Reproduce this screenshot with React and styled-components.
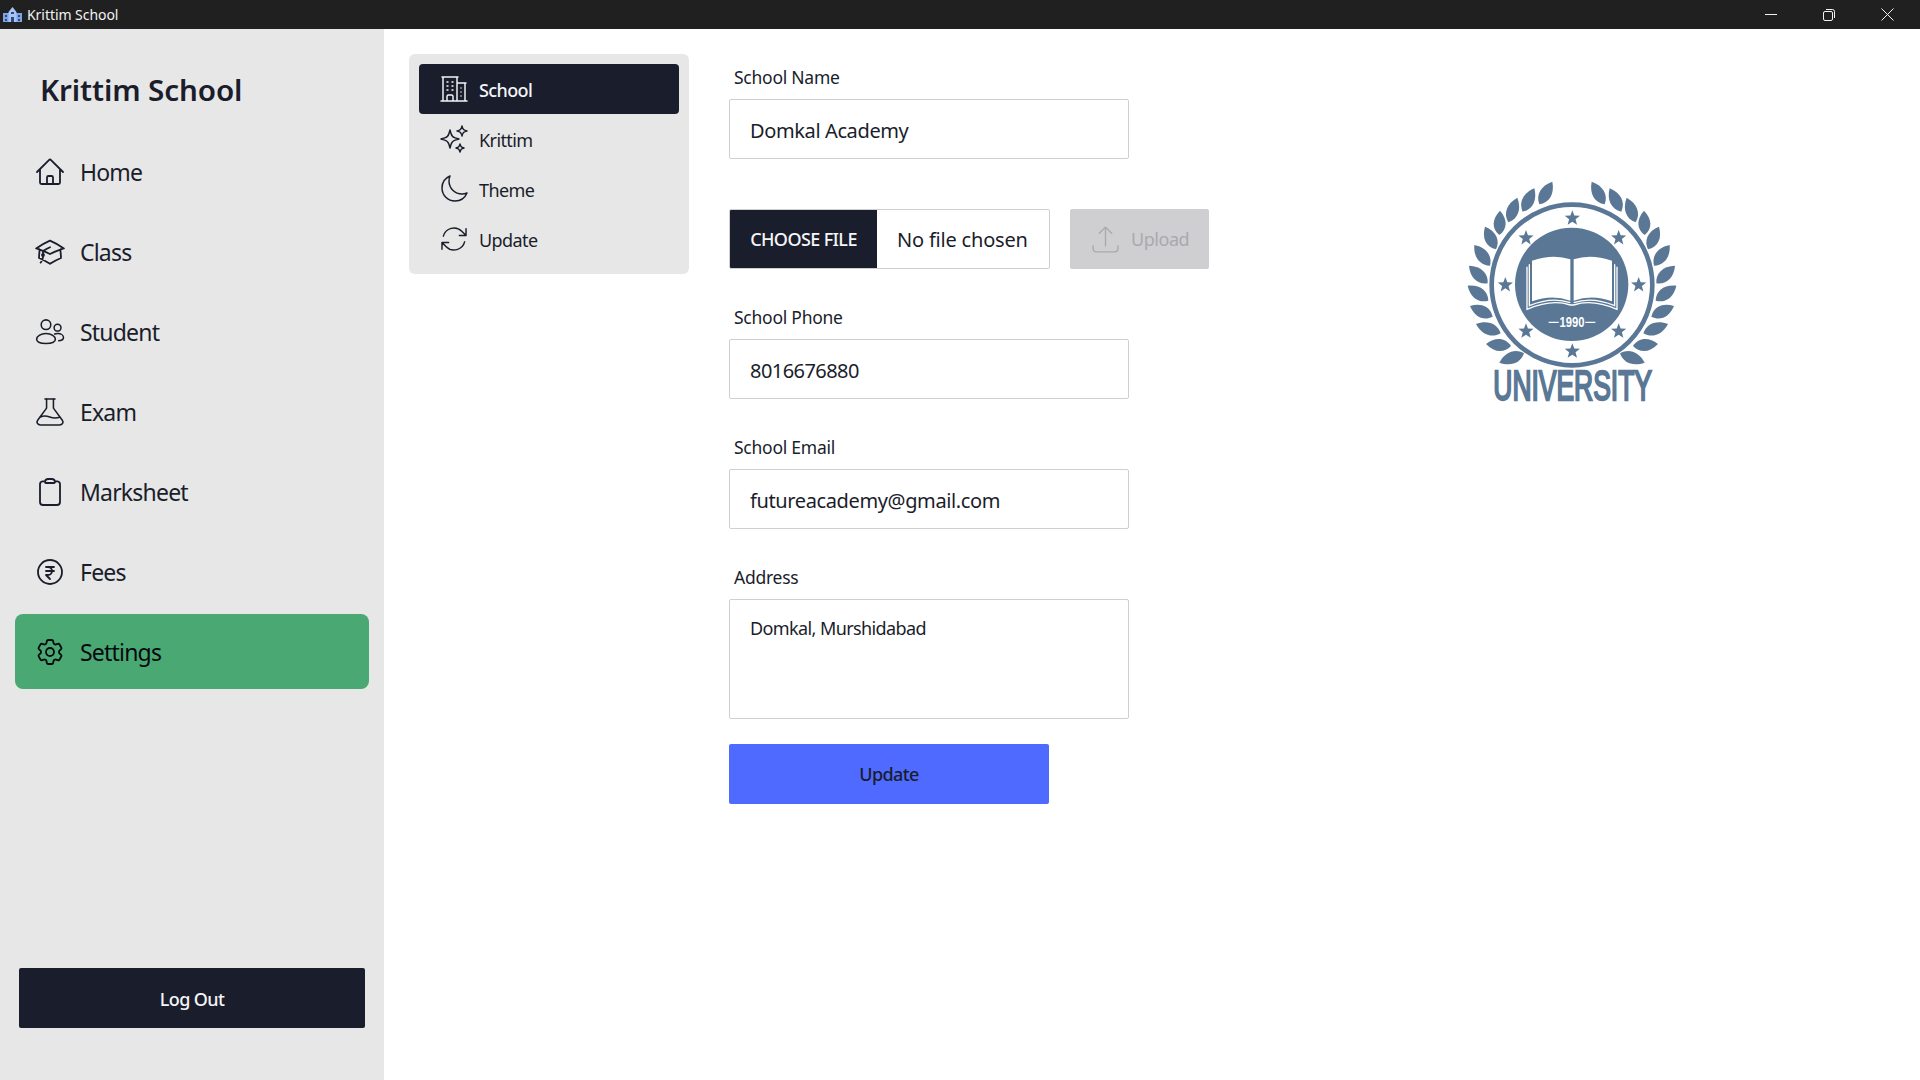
import React from "react";
import styled, { createGlobalStyle } from "styled-components";
import {
  HiOutlineHome,
  HiOutlineAcademicCap,
  HiOutlineClipboard,
  HiOutlineCurrencyRupee,
  HiOutlineCog6Tooth,
  HiOutlineBuildingOffice2,
  HiOutlineSparkles,
  HiOutlineMoon,
  HiOutlineArrowPath,
  HiOutlineArrowUpTray,
} from "react-icons/hi2";

const FONT = `"Noto Sans", "Open Sans", "Liberation Sans", sans-serif`;
const NAVY = "#1a1d2b";
const LOGO = "#5a7896";

const Global = createGlobalStyle`
  html, body { margin: 0; padding: 0; background: #fff; }
  body { font-family: ${FONT}; color: ${NAVY}; overflow: hidden; }
  * { box-sizing: border-box; }
`;

const Window = styled.div`
  width: 1920px;
  height: 1080px;
  display: flex;
  flex-direction: column;
  overflow: hidden;
`;

const TitleBar = styled.header`
  height: 29px;
  flex: none;
  background: #202020;
  color: #f2f2f2;
  display: flex;
  align-items: center;
  font-size: 14px;
  letter-spacing: -0.05px;
  padding: 0 4px 0 3px;
`;
const TitleText = styled.span`
  margin-left: 5px;
  flex: 1;
`;
const WinButton = styled.div`
  width: 58px;
  height: 29px;
  display: flex;
  align-items: center;
  justify-content: center;
`;

const Body = styled.div`
  flex: 1;
  display: flex;
  min-height: 0;
`;

const Sidebar = styled.aside`
  width: 384px;
  flex: none;
  background: #e7e7e7;
  display: flex;
  flex-direction: column;
  padding: 0 15px;
`;
const Brand = styled.h1`
  margin: 0;
  height: 105px;
  padding: 41px 0 0 25px;
  font-size: 29.6px;
  line-height: 40px;
  font-weight: 600;
  letter-spacing: -0.1px;
`;
const Nav = styled.nav`
  display: flex;
  flex-direction: column;
  gap: 5px;
`;
const NavItem = styled.div`
  height: 75px;
  border-radius: 8px;
  display: flex;
  align-items: center;
  gap: 14px;
  padding-left: 19px;
  font-size: 23px;
  letter-spacing: -0.8px;
  background: ${(p) => (p.$active ? "#4aa873" : "transparent")};
  color: ${(p) => (p.$active ? "#050a10" : NAVY)};
  svg { width: 32px; height: 32px; flex: none; stroke-width: 1.35; }
`;
const LogoutButton = styled.button`
  margin: auto 4px 52px;
  height: 60px;
  flex: none;
  border: 0;
  border-radius: 2px;
  padding: 2px 0 0;
  background: ${NAVY};
  color: #f4f5f7;
  font-family: ${FONT};
  font-size: 18px;
  font-weight: 500;
  letter-spacing: -0.6px;
`;

const Main = styled.main`
  flex: 1;
  display: flex;
  align-items: flex-start;
  padding-left: 25px;
`;

const SubMenu = styled.div`
  width: 280px;
  height: 220px;
  margin-top: 25px;
  padding: 10px;
  background: #e7e7e7;
  border-radius: 6px;
  display: flex;
  flex-direction: column;
  flex: none;
`;
const SubItem = styled.div`
  height: 50px;
  display: flex;
  align-items: center;
  gap: 9px;
  padding-left: 19px;
  padding-top: 1px;
  font-size: 18px;
  letter-spacing: -0.6px;
  border-radius: 4px;
  font-weight: ${(p) => (p.$active ? 500 : 400)};
  background: ${(p) => (p.$active ? NAVY : "transparent")};
  color: ${(p) => (p.$active ? "#f4f5f7" : NAVY)};
  svg { width: 32px; height: 32px; flex: none; stroke-width: 1.1; margin-top: -2px; }
`;

const Form = styled.form`
  margin-left: 40px;
  width: 480px;
  flex: none;
  display: flex;
  flex-direction: column;
`;
const Field = styled.div`
  padding-top: 38px;
  display: flex;
  flex-direction: column;
`;
const Label = styled.label`
  height: 20px;
  line-height: 20px;
  margin: 0 0 12px 5px;
  font-size: 17.5px;
  letter-spacing: -0.25px;
`;
const TextInput = styled.input`
  width: 400px;
  height: 60px;
  padding: 2px 20px 0;
  border: 1px solid #cfcfd1;
  border-radius: 2px;
  background: #fff;
  color: ${NAVY};
  font-family: ${FONT};
  font-size: 20px;
  letter-spacing: ${(p) => p.$spacing || "-0.38px"};
  outline: none;
`;
const AddressInput = styled.textarea`
  width: 400px;
  height: 120px;
  padding: 16px 20px;
  border: 1px solid #cfcfd1;
  border-radius: 2px;
  background: #fff;
  color: ${NAVY};
  font-family: ${FONT};
  font-size: 18px;
  line-height: 24px;
  letter-spacing: -0.6px;
  resize: none;
  outline: none;
  display: block;
`;
const FileRow = styled.div`
  margin-top: 50px;
  display: flex;
  gap: 20px;
`;
const FileBox = styled.div`
  width: 321px;
  height: 60px;
  border: 1px solid #cfcfd1;
  border-radius: 2px;
  display: flex;
  align-items: center;
  overflow: hidden;
`;
const ChooseButton = styled.div`
  width: 147px;
  height: 100%;
  background: ${NAVY};
  color: #f4f5f7;
  display: flex;
  align-items: center;
  justify-content: center;
  font-size: 18px;
  font-weight: 500;
  letter-spacing: -0.6px;
`;
const FileName = styled.span`
  margin-left: 20px;
  font-size: 20px;
  letter-spacing: -0.2px;
`;
const UploadButton = styled.button`
  width: 139px;
  height: 60px;
  border: 0;
  border-radius: 2px;
  background: #cfcfd1;
  color: #a9a9ae;
  font-family: ${FONT};
  font-size: 18px;
  letter-spacing: -0.45px;
  display: flex;
  align-items: center;
  gap: 9px;
  padding: 0 0 0 19px;
  svg { width: 33px; height: 33px; stroke-width: 1; flex: none; }
`;
const SubmitButton = styled.button`
  width: 320px;
  height: 60px;
  margin-top: 25px;
  border: 0;
  border-radius: 2px;
  background: #4f6bff;
  color: ${NAVY};
  font-family: ${FONT};
  font-size: 18px;
  font-weight: 500;
  letter-spacing: -0.6px;
`;

const LogoBox = styled.div`
  margin: 141px 0 0 231px;
  width: 260px;
  height: 240px;
  flex: none;
  svg { width: 100%; height: 100%; display: block; }
`;

const UsersIcon = () => (
  <svg viewBox="0 0 28 28" fill="none" stroke="currentColor">
    <circle cx="10.5" cy="7.6" r="4.2" />
    <circle cx="20.6" cy="10.2" r="3" />
    <path d="M10.5 15.4c-4.8 0-8.2 2.3-8.2 4.9 0 2.3 3.2 3.7 8.2 3.7s8.2-1.4 8.2-3.7c0-2.6-3.4-4.9-8.2-4.9Z" />
    <path d="M17.6 16c1-.4 2-.6 3.2-.6 3 0 5 1.6 5 3.5 0 1.6-1.7 2.7-4.7 2.8" />
  </svg>
);

const FlaskIcon = () => (
  <svg viewBox="0 0 28 28" fill="none" stroke="currentColor" strokeLinejoin="round" strokeLinecap="round">
    <path d="M9.6 2.6h8.8" />
    <path d="M11 2.6v8L3.2 21.2c-1.3 2-.2 4.2 2.6 4.2h16.4c2.8 0 3.9-2.2 2.6-4.2L17 10.6v-8" />
    <path d="M5.6 18.4c3-1.6 5.6-1 8.2 0 3 1.1 5.6 1.2 8.6.2" />
  </svg>
);

const RestoreIcon = () => (
  <svg width="12" height="12" viewBox="0 0 12 12" fill="none" stroke="#f2f2f2" strokeWidth="1">
    <rect x="0.5" y="2.5" width="9" height="9" rx="1.5" />
    <path d="M3 .5h6.5a2 2 0 0 1 2 2V9" />
  </svg>
);

const SchoolGlyph = () => (
  <svg width="19" height="15" viewBox="0 0 19 15">
    <rect x="0" y="6" width="19" height="9" fill="#7ea4e6" />
    <path d="M9.5 0 13.5 5V15H5.5V5Z" fill="#a9c5f2" />
    <rect x="8" y="10" width="3" height="5" fill="#2d4a86" />
    <rect x="8" y="5" width="3" height="2" fill="#2d4a86" />
    <path d="M2 8h2v2H2ZM2 12h2v2H2ZM15 8h2v2h-2ZM15 12h2v2h-2Z" fill="#2d4a86" />
  </svg>
);

const LEAVES = [
  [337, 35, 298, 103],
  [283, 55, 248, 125],
  [232, 83, 205, 157],
  [180, 122, 178, 195],
  [135, 170, 168, 238],
  [103, 225, 150, 287],
  [87, 287, 143, 340],
  [83, 347, 145, 392],
  [90, 408, 158, 440],
  [108, 462, 182, 490],
  [138, 522, 213, 528],
  [178, 578, 252, 550],
];

const leafPath = ([ax, ay, bx, by], mirror) => {
  const x1 = mirror ? 792 - ax : ax;
  const x2 = mirror ? 792 - bx : bx;
  const dx = x2 - x1;
  const dy = by - ay;
  const len = Math.hypot(dx, dy);
  const nx = -dy / len;
  const ny = dx / len;
  const w = 24;
  const c = (t, s) => `${(x1 + dx * t + nx * w * s).toFixed(1)} ${(ay + dy * t + ny * w * s).toFixed(1)}`;
  return `M${x1} ${ay}C${c(0.35, 1)} ${c(0.75, 1)} ${x2} ${by}C${c(0.75, -1)} ${c(0.35, -1)} ${x1} ${ay}Z`;
};

const starPath = (cx, cy, r) => {
  let d = "";
  for (let i = 0; i < 10; i++) {
    const rad = i % 2 ? r * 0.42 : r;
    const a = (Math.PI * i) / 5 - Math.PI / 2;
    d += `${i ? "L" : "M"}${(cx + rad * Math.cos(a)).toFixed(1)} ${(cy + rad * Math.sin(a)).toFixed(1)}`;
  }
  return d + "Z";
};

const STARS = [
  [397, 145], [536, 204], [596, 345], [536, 484],
  [397, 544], [258, 484], [196, 345], [258, 204],
];

const UniversityLogo = () => (
  <svg viewBox="0 0 780 720">
    {LEAVES.map((l, i) => (
      <React.Fragment key={i}>
        <path d={leafPath(l, false)} fill={LOGO} />
        <path d={leafPath(l, true)} fill={LOGO} />
      </React.Fragment>
    ))}
    <circle cx="396" cy="345" r="241" fill="none" stroke={LOGO} strokeWidth="14" />
    {STARS.map(([x, y], i) => (
      <path key={i} d={starPath(x, y, 24)} fill={LOGO} />
    ))}
    <circle cx="395" cy="343" r="170" fill={LOGO} />
    <path d="M276 272Q340 250 391 268V392Q335 372 276 394Z" fill="#fff" />
    <path d="M516 272Q452 250 401 268V392Q457 372 516 394Z" fill="#fff" />
    <g fill="none" stroke="#fff" strokeWidth="4">
      <path d="M261 290V418Q335 386 391 405H401Q457 386 531 418V290" />
      <path d="M268 283V407Q335 379 391 398M524 283V407Q457 379 401 398" />
    </g>
    <path d="M326 457H356M436 457H466" stroke="#fff" strokeWidth="4" />
    <text transform="scale(0.5 1)" x="792" y="472" textAnchor="middle" fontFamily="Liberation Sans, sans-serif" fontWeight="700" fontSize="44" fill="#fff" textLength="150" lengthAdjust="spacingAndGlyphs">
      1990
    </text>
    <text transform="scale(0.56 1)" x="285.7" y="690" fontFamily="Liberation Sans, sans-serif" fontSize="128" fill={LOGO} textLength="850" lengthAdjust="spacingAndGlyphs" stroke={LOGO} strokeWidth="7">
      UNIVERSITY
    </text>
  </svg>
);

const NAV = [
  ["Home", <HiOutlineHome />],
  ["Class", <HiOutlineAcademicCap />],
  ["Student", <UsersIcon />],
  ["Exam", <FlaskIcon />],
  ["Marksheet", <HiOutlineClipboard />],
  ["Fees", <HiOutlineCurrencyRupee />],
  ["Settings", <HiOutlineCog6Tooth />, true],
];

const SUB = [
  ["School", <HiOutlineBuildingOffice2 />, true],
  ["Krittim", <HiOutlineSparkles />],
  ["Theme", <HiOutlineMoon />],
  ["Update", <HiOutlineArrowPath />],
];

export default function App() {
  return (
    <Window>
      <Global />
      <TitleBar>
        <SchoolGlyph />
        <TitleText>Krittim School</TitleText>
        <WinButton>
          <svg width="12" height="2"><rect width="12" height="1" fill="#f2f2f2" /></svg>
        </WinButton>
        <WinButton><RestoreIcon /></WinButton>
        <WinButton>
          <svg width="13" height="13" viewBox="0 0 13 13" stroke="#f2f2f2" strokeWidth="1"><path d="M.5.5l12 12M12.5.5l-12 12" /></svg>
        </WinButton>
      </TitleBar>
      <Body>
        <Sidebar>
          <Brand>Krittim School</Brand>
          <Nav>
            {NAV.map(([label, icon, active]) => (
              <NavItem key={label} $active={active}>
                {icon}
                {label}
              </NavItem>
            ))}
          </Nav>
          <LogoutButton>Log Out</LogoutButton>
        </Sidebar>
        <Main>
          <SubMenu>
            {SUB.map(([label, icon, active]) => (
              <SubItem key={label} $active={active}>
                {icon}
                {label}
              </SubItem>
            ))}
          </SubMenu>
          <Form>
            <Field>
              <Label>School Name</Label>
              <TextInput defaultValue="Domkal Academy" />
            </Field>
            <FileRow>
              <FileBox>
                <ChooseButton>CHOOSE FILE</ChooseButton>
                <FileName>No file chosen</FileName>
              </FileBox>
              <UploadButton type="button">
                <HiOutlineArrowUpTray />
                Upload
              </UploadButton>
            </FileRow>
            <Field>
              <Label>School Phone</Label>
              <TextInput defaultValue="8016676880" $spacing="-0.55px" />
            </Field>
            <Field>
              <Label>School Email</Label>
              <TextInput defaultValue="futureacademy@gmail.com" />
            </Field>
            <Field>
              <Label>Address</Label>
              <AddressInput defaultValue="Domkal, Murshidabad" />
            </Field>
            <SubmitButton type="button">Update</SubmitButton>
          </Form>
          <LogoBox><UniversityLogo /></LogoBox>
        </Main>
      </Body>
    </Window>
  );
}
